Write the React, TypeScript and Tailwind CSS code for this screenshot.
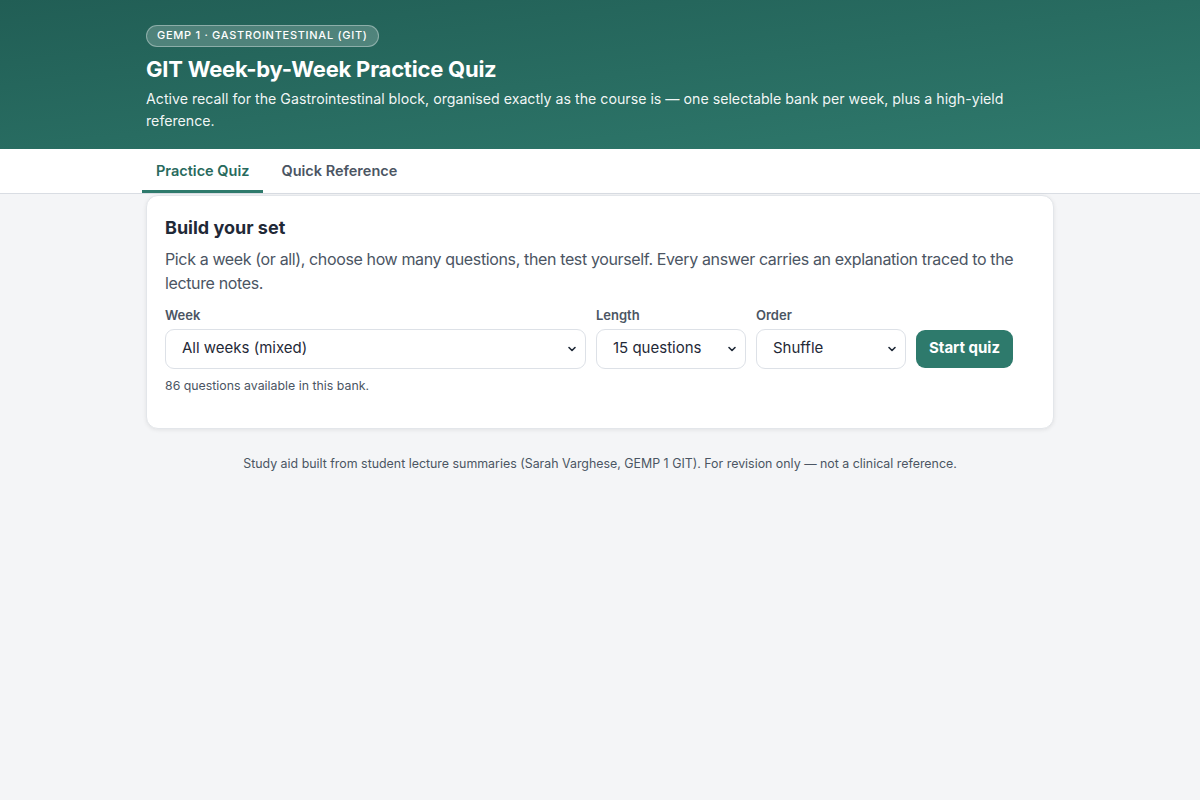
import { useState } from "react";

function Chevron() {
  return (
    <svg className="pointer-events-none absolute right-[9px] top-1/2 -translate-y-1/2" width="10" height="10" viewBox="0 0 10 10" fill="none">
      <path d="M2 3.5 5 6.5 8 3.5" stroke="#1f2937" strokeWidth="1.6" strokeLinecap="round" strokeLinejoin="round" />
    </svg>
  );
}

function Field({ label, className, value, options, onChange }: { label: string; className: string; value: string; options: string[]; onChange: (v: string) => void }) {
  return (
    <div className={`flex flex-col ${className}`}>
      <label className="text-[13px] font-semibold text-[#4b5563] leading-[18px] mb-[5px]">{label}</label>
      <div className="relative">
        <select
          value={value}
          onChange={(e) => onChange(e.target.value)}
          className="w-full h-[40px] appearance-none rounded-[9px] border border-[#dde1e7] bg-white pl-[16px] pr-8 text-[15px] text-[#1f2937] outline-none"
        >
          {options.map((o) => (
            <option key={o}>{o}</option>
          ))}
        </select>
        <Chevron />
      </div>
    </div>
  );
}

export default function App() {
  const [tab, setTab] = useState("quiz");
  const [week, setWeek] = useState("All weeks (mixed)");
  const [len, setLen] = useState("15 questions");
  const [order, setOrder] = useState("Shuffle");

  return (
    <div className="min-h-screen bg-[#f4f5f7] font-['Inter','Noto_Sans',sans-serif] antialiased">
      <header className="bg-gradient-to-br from-[#215e55] to-[#2f7a6d] text-white">
        <div className="mx-auto max-w-[908px] pt-[21px] pb-[17px]">
          <span className="inline-block rounded-full border border-white/35 bg-white/20 px-[10px] py-[2.5px] text-[11px] font-medium uppercase tracking-[0.065em] leading-[15px]">
            GEMP 1 · Gastrointestinal (GIT)
          </span>
          <h1 className="mt-[8px] text-[22px] font-bold leading-[28px] tracking-[-0.01em]">GIT Week-by-Week Practice Quiz</h1>
          <p className="mt-[5px] max-w-[880px] text-[14.2px] leading-[22px] text-white/95">
            Active recall for the Gastrointestinal block, organised exactly as the course is — one selectable bank per week, plus a high-yield reference.
          </p>
        </div>
      </header>

      <nav className="border-b border-[#d9dde3] bg-white">
        <div className="mx-auto flex max-w-[916px]">
          <button
            onClick={() => setTab("quiz")}
            className={`h-[44px] border-b-[3px] px-[14px] pt-[3px] text-[14.5px] font-semibold ${tab === "quiz" ? "border-[#2e7a6c] text-[#286a5d]" : "border-transparent text-[#4b5563]"}`}
          >
            Practice Quiz
          </button>
          <button
            onClick={() => setTab("ref")}
            className={`h-[44px] border-b-[3px] px-[18px] pt-[3px] text-[14.5px] font-semibold ${tab === "ref" ? "border-[#2e7a6c] text-[#286a5d]" : "border-transparent text-[#4b5563]"}`}
          >
            Quick Reference
          </button>
        </div>
      </nav>

      <main className="mx-auto max-w-[908px] pt-[1px]">
        <section className="rounded-[12px] border border-[#e3e6ea] bg-white px-[18px] pt-[19px] pb-[34px] shadow-[0_1px_4px_rgba(0,0,0,0.08)]">
          <h2 className="text-[18px] font-bold leading-[26px] text-[#1f2937]">Build your set</h2>
          <p className="mt-[6px] text-[16px] leading-[24px] tracking-[-0.023em] text-[#4b5563]">
            Pick a week (or all), choose how many questions, then test yourself. Every answer carries an explanation traced to the lecture notes.
          </p>
          <div className="mt-[11px] mr-[22px] flex items-end gap-[10px]">
            <Field
              label="Week"
              className="flex-1"
              value={week}
              onChange={setWeek}
              options={["All weeks (mixed)", "Week 1", "Week 2", "Week 3", "Week 4", "Week 5", "Week 6"]}
            />
            <Field label="Length" className="w-[150px]" value={len} onChange={setLen} options={["10 questions", "15 questions", "25 questions", "All questions"]} />
            <Field label="Order" className="w-[150px]" value={order} onChange={setOrder} options={["Shuffle", "In order"]} />
            <button className="mb-[1px] h-[38px] rounded-[9px] bg-[#2e7a6c] px-[13px] text-[15px] font-bold text-white">Start quiz</button>
          </div>
          <p className="mt-[9px] text-[12.35px] leading-[16px] text-[#4b5563]">86 questions available in this bank.</p>
        </section>

        <footer className="pt-[27px] text-center text-[12.4px] leading-[16px] text-[#4b5563]">
          Study aid built from student lecture summaries (Sarah Varghese, GEMP 1 GIT). For revision only — not a clinical reference.
        </footer>
      </main>
    </div>
  );
}
